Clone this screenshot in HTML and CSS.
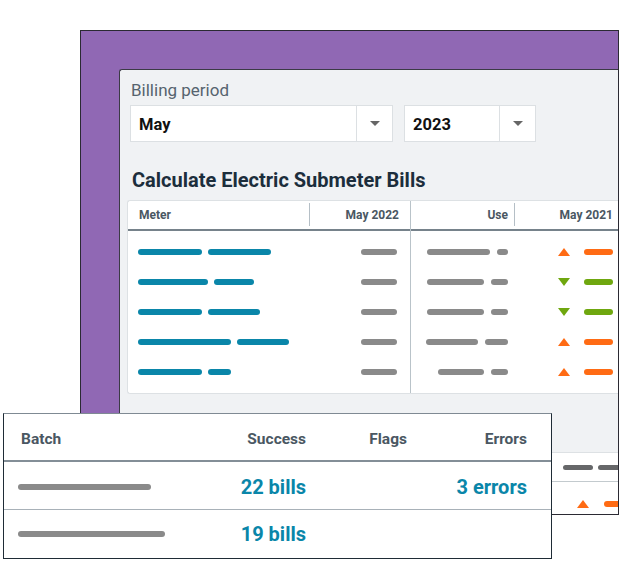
FILE: index.html
```html
<!DOCTYPE html>
<html lang="en">
<head>
<meta charset="utf-8">
<title>Calculate Electric Submeter Bills</title>
<link rel="stylesheet" href="styles.css">
</head>
<body>
<div class="stage">
  <div class="window">
    <div class="panel">
      <div class="label">Billing period</div>
      <div class="selects">
        <div class="select month"><span class="value">May</span><span class="caret-box"><span class="caret"></span></span></div>
        <div class="select year"><span class="value">2023</span><span class="caret-box"><span class="caret"></span></span></div>
      </div>
      <h1 class="title">Calculate Electric Submeter Bills</h1>
      <div class="meter-table">
        <div class="group group-left">
          <div class="thead">
            <div class="th th-meter">Meter</div>
            <div class="th th-prev">May 2022</div>
          </div>
          <div class="tbody">
            <div class="row"><div class="cell c-meter"><i class="dash blue" style="width:64px"></i><i class="dash blue" style="width:63px"></i></div><div class="cell c-prev"><i class="dash gray" style="width:36px"></i></div></div>
            <div class="row"><div class="cell c-meter"><i class="dash blue" style="width:70px"></i><i class="dash blue" style="width:40px"></i></div><div class="cell c-prev"><i class="dash gray" style="width:36px"></i></div></div>
            <div class="row"><div class="cell c-meter"><i class="dash blue" style="width:64px"></i><i class="dash blue" style="width:52px"></i></div><div class="cell c-prev"><i class="dash gray" style="width:36px"></i></div></div>
            <div class="row"><div class="cell c-meter"><i class="dash blue" style="width:93px"></i><i class="dash blue" style="width:52px"></i></div><div class="cell c-prev"><i class="dash gray" style="width:36px"></i></div></div>
            <div class="row"><div class="cell c-meter"><i class="dash blue" style="width:64px"></i><i class="dash blue" style="width:23px"></i></div><div class="cell c-prev"><i class="dash gray" style="width:36px"></i></div></div>
          </div>
        </div>
        <div class="group group-right">
          <div class="thead">
            <div class="th th-use">Use</div>
            <div class="th th-old">May 2021</div>
          </div>
          <div class="tbody">
            <div class="row"><div class="cell c-use"><i class="dash gray" style="width:63px"></i><i class="dash gray" style="width:11px"></i></div><div class="cell c-old"><i class="tri up"></i><i class="dash orange"></i></div></div>
            <div class="row"><div class="cell c-use"><i class="dash gray" style="width:57px"></i><i class="dash gray" style="width:17px"></i></div><div class="cell c-old"><i class="tri down"></i><i class="dash green"></i></div></div>
            <div class="row"><div class="cell c-use"><i class="dash gray" style="width:57px"></i><i class="dash gray" style="width:17px"></i></div><div class="cell c-old"><i class="tri down"></i><i class="dash green"></i></div></div>
            <div class="row"><div class="cell c-use"><i class="dash gray" style="width:52px"></i><i class="dash gray" style="width:23px"></i></div><div class="cell c-old"><i class="tri up"></i><i class="dash orange"></i></div></div>
            <div class="row"><div class="cell c-use"><i class="dash gray" style="width:46px"></i><i class="dash gray" style="width:17px"></i></div><div class="cell c-old"><i class="tri up"></i><i class="dash orange"></i></div></div>
          </div>
        </div>
      </div>
      <div class="results">
        <div class="results-head"><i class="dash dark"></i><i class="dash dark"></i></div>
        <div class="results-row"><i class="tri up"></i><i class="dash orange"></i></div>
      </div>
    </div>
  </div>

  <div class="batch-card">
    <div class="batch-grid batch-head">
      <div class="bc bc-name">Batch</div>
      <div class="bc bc-num">Success</div>
      <div class="bc bc-num">Flags</div>
      <div class="bc bc-num">Errors</div>
    </div>
    <div class="batch-grid batch-row">
      <div class="bc"><i class="bar" style="width:133px"></i></div>
      <div class="bc bc-num val">22 bills</div>
      <div class="bc bc-num val"></div>
      <div class="bc bc-num val">3 errors</div>
    </div>
    <div class="batch-grid batch-row last">
      <div class="bc"><i class="bar" style="width:147px"></i></div>
      <div class="bc bc-num val">19 bills</div>
      <div class="bc bc-num val"></div>
      <div class="bc bc-num val"></div>
    </div>
  </div>
</div>
</body>
</html>
```

FILE: styles.css
```css
* { box-sizing: border-box; }

html, body {
  margin: 0;
  padding: 0;
  background: #ffffff;
}

body {
  font-family: "Roboto", "Liberation Sans", sans-serif;
  color: #1c2e3c;
}

.stage {
  position: relative;
  width: 621px;
  height: 587px;
  overflow: hidden;
  padding-top: 30px;
  padding-left: 80px;
}

/* purple window */
.window {
  width: 539px;
  height: 485px;
  background: #9068b4;
  border: 1px solid #2b2a33;
  padding: 38px 0 0 38px;
  overflow: hidden;
}

.panel {
  width: 560px;
  height: 460px;
  background: #f0f2f4;
  border-top: 1px solid #3b3a46;
  border-left: 1px solid #3b3a46;
  border-top-left-radius: 3px;
  padding: 10px 0 0 7px;
}

.label {
  margin-left: 4px;
  font-size: 17px;
  line-height: 20px;
  color: #56636e;
}

.selects {
  display: flex;
  gap: 11px;
  margin: 5px 0 0 3px;
}

.select {
  display: flex;
  align-items: stretch;
  height: 37px;
  background: #ffffff;
  border: 1px solid #dce0e3;
}

.select.month { width: 263px; }
.select.year { width: 132px; }

.select .value {
  flex: 1;
  display: flex;
  align-items: center;
  padding: 2px 0 0 8px;
  font-size: 16.5px;
  font-weight: 700;
  color: #111111;
}

.caret-box {
  display: flex;
  align-items: center;
  justify-content: center;
  width: 36px;
  border-left: 1px solid #dce0e3;
}

.caret {
  width: 0;
  height: 0;
  border-left: 5.5px solid transparent;
  border-right: 5.5px solid transparent;
  border-top: 5px solid #666666;
}

.title {
  margin: 26px 0 8px 5px;
  font-size: 20px;
  line-height: 24px;
  font-weight: 700;
  color: #1c2e3c;
}

/* meter table */
.meter-table {
  display: flex;
  width: 520px;
  height: 194px;
  background: #ffffff;
  border: 1px solid #dde1e4;
  border-right: none;
  border-radius: 3px 0 0 3px;
}

.group { display: flex; flex-direction: column; }
.group-left { width: 282px; }
.group-right { flex: 1; border-left: 1px solid #b9c3c9; }

.thead {
  display: flex;
  height: 30px;
  border-bottom: 2px solid #76828b;
}

.th {
  position: relative;
  display: flex;
  align-items: center;
  font-size: 12px;
  font-weight: 700;
  color: #4a5762;
}

.th-meter { width: 182px; padding-left: 11px; }
.th-prev { width: 100px; justify-content: flex-end; padding-right: 11px; }
.th-use { width: 104px; justify-content: flex-end; padding-right: 7px; }
.th-old { width: 108px; justify-content: flex-end; padding-right: 10px; }

.th-meter::after,
.th-use::after {
  content: "";
  position: absolute;
  right: 0;
  top: 2px;
  bottom: 3px;
  width: 1px;
  background: #b5bfc6;
}

.tbody { padding-top: 6px; }

.row { display: flex; height: 30px; }

.cell { display: flex; align-items: center; gap: 6px; }
.c-meter { width: 182px; padding-left: 10px; }
.c-prev { width: 100px; justify-content: flex-end; padding-right: 13px; }
.c-use { width: 104px; justify-content: flex-end; padding-right: 7px; gap: 7px; }
.c-old { width: 108px; justify-content: flex-end; padding-right: 10px; gap: 14px; }

.dash {
  display: block;
  height: 6px;
  border-radius: 3px;
}

.dash.blue { background: #0a86a9; }
.dash.gray { background: #8a8a8a; }
.dash.orange { background: #ff6b14; width: 29px; }
.dash.green { background: #6fa70f; width: 29px; }
.dash.dark { background: #666769; width: 30px; height: 5px; }

.tri {
  display: block;
  width: 0;
  height: 0;
  border-left: 6.5px solid transparent;
  border-right: 6.5px solid transparent;
}

.tri.up { border-bottom: 8px solid #ff6b14; }
.tri.down { border-top: 8px solid #6fa70f; }

/* second table, mostly hidden */
.results {
  width: 520px;
  margin-top: 58px;
  background: #ffffff;
  border-top: 1px solid #dde1e4;
  border-left: 1px solid #dde1e4;
}

.results-head {
  display: flex;
  align-items: center;
  gap: 5px;
  height: 29px;
  padding-left: 435px;
  border-bottom: 1px solid #c3cace;
}

.results-row {
  display: flex;
  align-items: center;
  gap: 15px;
  height: 44px;
  padding-left: 449px;
}

/* batch card, overlapping the window */
.batch-card {
  position: absolute;
  left: 3px;
  top: 413px;
  width: 549px;
  height: 146px;
  background: #ffffff;
  border: 1px solid #1f2c36;
  border-top-color: #7f8a93;
}

.batch-grid {
  display: grid;
  grid-template-columns: 198px 90px 101px 120px;
  padding: 0 23px 0 14px;
}

.batch-head {
  height: 48px;
  padding-top: 4px;
  border-bottom: 2px solid #838e97;
  font-size: 15.5px;
  font-weight: 700;
  color: #4a5762;
}

.batch-row {
  height: 48px;
  padding-top: 3px;
  border-bottom: 1px solid #a8b1b8;
}

.batch-row.last { border-bottom: none; height: 46px; padding-top: 2px; }

.bc {
  display: flex;
  align-items: center;
}

.bc-name { padding-left: 3px; }

.bc-num { justify-content: flex-end; }

.val {
  font-size: 20px;
  font-weight: 700;
  color: #0a86a9;
}

.bar {
  display: block;
  height: 6px;
  border-radius: 3px;
  background: #8a8a8a;
}
```
